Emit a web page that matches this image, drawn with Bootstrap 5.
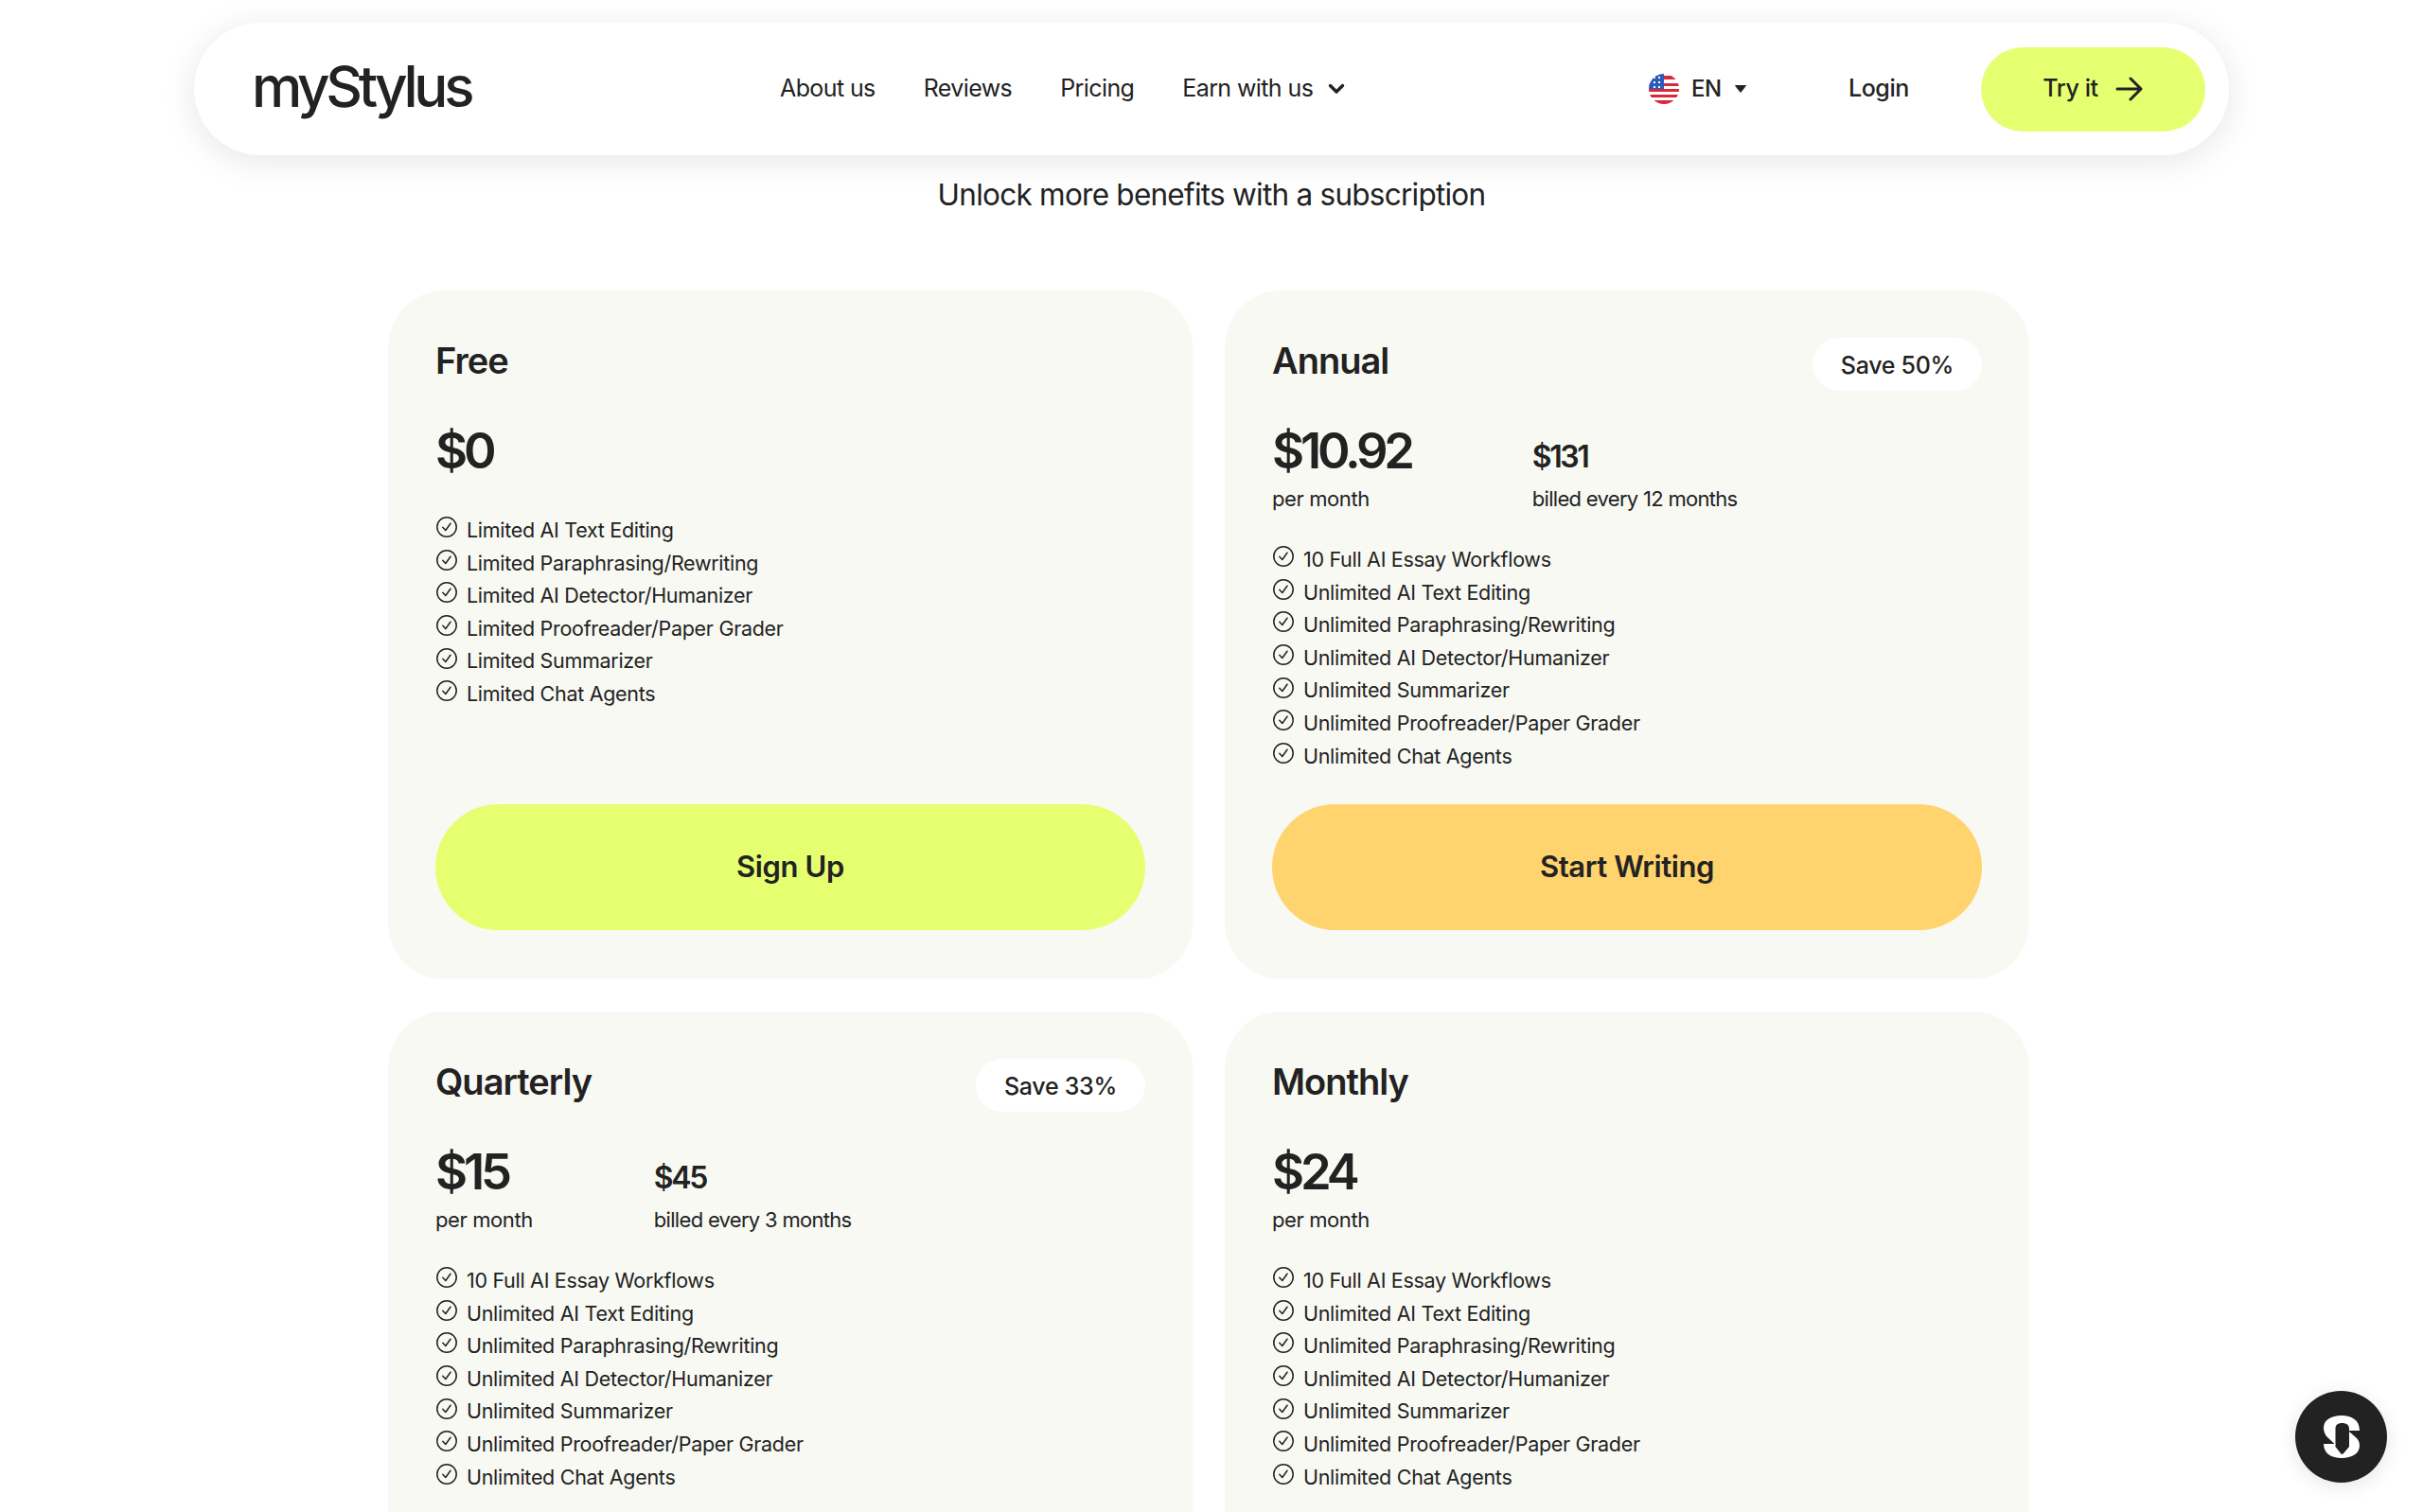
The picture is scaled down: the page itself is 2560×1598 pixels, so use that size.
<!DOCTYPE html>
<html lang="en">
<head>
<meta charset="utf-8">
<title>myStylus pricing</title>
<link rel="stylesheet" href="https://cdn.jsdelivr.net/npm/bootstrap@5.3.0/dist/css/bootstrap.min.css">
<style>
html,body{height:100vh;overflow:hidden;background:#fff}
body{font-family:Inter,"Liberation Sans",sans-serif;color:#222;padding-top:24px}
.ms-wrap{width:2150px;margin:0 auto}
.ms-nav{height:140px;border-radius:70px;background:#fff;box-shadow:0 6px 36px rgba(0,0,0,.1);padding:0 25px 0 61px}
.ms-logo{font-size:60px;font-weight:550;letter-spacing:-4.3px;color:#222;line-height:1;width:558px;text-decoration:none;padding-bottom:6px}
.ms-links{gap:51px;font-size:25px;letter-spacing:-.6px;width:871px}
.ms-links a,.ms-login{color:#222;text-decoration:none}
.ms-lang{font-size:24px;font-weight:500;gap:9px;width:196px;margin-left:47px;letter-spacing:-.5px}
.ms-login{font-size:25px;font-weight:500;letter-spacing:-.4px;margin-right:76px}
.ms-try{width:237px;height:89px;border-radius:45px;background:#e6ff70;border:0;font-size:25px;font-weight:500;color:#222;gap:18px;letter-spacing:-.4px}
.ms-try:hover{background:#e6ff70;color:#222}
.ms-sub{font-size:31.5px;line-height:40px;text-align:center;margin:22px 0 0;letter-spacing:-.75px;color:#222}
.ms-plans{width:1768px;margin:47px 0 0 393px;--bs-gutter-x:34px;--bs-gutter-y:34px}
.ms-plan{background:#f8f9f3;border:0;border-radius:60px;min-height:728px;padding:50px 50px 52px;color:#222}
.ms-head{height:48px}
.ms-name{font-size:38px;font-weight:600;line-height:48px;letter-spacing:-1px;margin:0}
.ms-save{background:#fff;border-radius:28px;height:56px;padding:3px 30px 0;font-size:25px;font-weight:500;letter-spacing:-.3px}
.ms-prices{gap:128px;margin-top:39px}
.ms-big{font-size:52.5px;font-weight:600;line-height:64px;letter-spacing:-4.2px}
.ms-mid{font-size:32px;font-weight:600;line-height:51px;letter-spacing:-2.4px;padding-top:13px}
.ms-per{font-size:22px;line-height:30px;margin-top:4px;height:30px;letter-spacing:-.4px}
.ms-billed{letter-spacing:-.7px}
.ms-list{list-style:none;margin:32px 0 0;padding:0;font-size:21.5px;letter-spacing:-.3px}
.ms-list li{height:34.6px;gap:9px;line-height:34.6px;white-space:nowrap}
.ms-list svg{flex:none;margin-top:-6px}
.ms-free .ms-list{margin-top:35px}
.ms-cta{height:133px;border-radius:67px;border:0;font-size:31px;font-weight:600;color:#222;width:100%;letter-spacing:-.4px}
.ms-cta:hover{color:#222}
.ms-lime{background:#e6ff70}.ms-lime:hover{background:#e6ff70}
.ms-amber{background:#ffd36e}.ms-amber:hover{background:#ffd36e}
.ms-fab{position:fixed;left:2425px;top:1470px;width:97px;height:97px;border-radius:50%;background:#222;box-shadow:0 4px 20px rgba(0,0,0,.1)}
</style>
</head>
<body>
<svg width="0" height="0" class="position-absolute"><defs>
<symbol id="chk" viewBox="0 0 24 24"><circle cx="12" cy="12" r="10.2" fill="none" stroke="#222" stroke-width="1.5"/><path d="M7.8 12.3l3 3.2 5.2-7.3" fill="none" stroke="#222" stroke-width="1.5" stroke-linecap="round" stroke-linejoin="round"/></symbol>
</defs></svg>

<div class="ms-wrap">
<nav class="navbar ms-nav d-flex flex-nowrap align-items-center">
  <a class="ms-logo" href="#">myStylus</a>
  <div class="ms-links d-flex align-items-center">
    <a href="#">About us</a><a href="#">Reviews</a><a href="#">Pricing</a>
    <a href="#" class="d-flex align-items-center gap-3">Earn with us
      <svg width="18" height="12" viewBox="0 0 18 12"><path d="M2.500 2.500L9 9l6.500-6.500" fill="none" stroke="#222" stroke-width="3.400" stroke-linecap="round" stroke-linejoin="round"/></svg></a>
  </div>
  <div class="ms-lang d-flex align-items-center">
    <svg width="32" height="32" viewBox="0 0 32 32"><defs><clipPath id="flagc"><circle cx="16" cy="16" r="16"/></clipPath></defs><g clip-path="url(#flagc)"><rect width="32" height="32" fill="#fff"/><path d="M0 2h32v4H0zM0 10h32v3H0zM0 16h32v3H0zM0 22h32v3H0zM0 28h32v4H0z" fill="#d8293a"/><rect width="16" height="16" fill="#2a5cb8"/><path d="M5 3h2v2H5zM10 3h2v2h-2zM5 8h2v2H5zM10 8h2v2h-2zM5 13h2v2H5zM10 13h2v2h-2z" fill="#fff"/></g></svg>
    <span class="ms-1">EN</span>
    <svg class="ms-1" width="14" height="10" viewBox="0 0 14 10"><path d="M1.500 1.500h11L7 8.500z" fill="#222" stroke="#222" stroke-linejoin="round"/></svg>
  </div>
  <a class="ms-login ms-auto" href="#">Login</a>
  <button class="btn ms-try d-flex align-items-center justify-content-center">Try it
    <svg width="30" height="26" viewBox="0 0 30 26"><path d="M2 13h25M16 2l11 11-11 11" fill="none" stroke="#222" stroke-width="3" stroke-linecap="round" stroke-linejoin="round"/></svg></button>
</nav>
<p class="ms-sub">Unlock more benefits with a subscription</p>
</div>

<div class="row row-cols-2 ms-plans">
  <div class="col">
    <div class="card ms-plan ms-free">
      <div class="ms-head"><h5 class="ms-name">Free</h5></div>
      <div class="ms-prices d-flex"><div class="ms-big">$0</div></div>
      <ul class="ms-list">
        <li class="d-flex align-items-center"><svg width="24" height="24"><use href="#chk"/></svg>Limited AI Text Editing</li>
        <li class="d-flex align-items-center"><svg width="24" height="24"><use href="#chk"/></svg>Limited Paraphrasing/Rewriting</li>
        <li class="d-flex align-items-center"><svg width="24" height="24"><use href="#chk"/></svg>Limited AI Detector/Humanizer</li>
        <li class="d-flex align-items-center"><svg width="24" height="24"><use href="#chk"/></svg>Limited Proofreader/Paper Grader</li>
        <li class="d-flex align-items-center"><svg width="24" height="24"><use href="#chk"/></svg>Limited Summarizer</li>
        <li class="d-flex align-items-center"><svg width="24" height="24"><use href="#chk"/></svg>Limited Chat Agents</li>
      </ul>
      <button class="btn ms-cta ms-lime mt-auto">Sign Up</button>
    </div>
  </div>
  <div class="col">
    <div class="card ms-plan">
      <div class="ms-head d-flex justify-content-between align-items-start"><h5 class="ms-name">Annual</h5><span class="ms-save d-flex align-items-center">Save 50%</span></div>
      <div class="ms-prices d-flex">
        <div><div class="ms-big">$10.92</div><div class="ms-per">per month</div></div>
        <div><div class="ms-mid">$131</div><div class="ms-per ms-billed">billed every 12 months</div></div>
      </div>
      <ul class="ms-list">
        <li class="d-flex align-items-center"><svg width="24" height="24"><use href="#chk"/></svg>10 Full AI Essay Workflows</li>
        <li class="d-flex align-items-center"><svg width="24" height="24"><use href="#chk"/></svg>Unlimited AI Text Editing</li>
        <li class="d-flex align-items-center"><svg width="24" height="24"><use href="#chk"/></svg>Unlimited Paraphrasing/Rewriting</li>
        <li class="d-flex align-items-center"><svg width="24" height="24"><use href="#chk"/></svg>Unlimited AI Detector/Humanizer</li>
        <li class="d-flex align-items-center"><svg width="24" height="24"><use href="#chk"/></svg>Unlimited Summarizer</li>
        <li class="d-flex align-items-center"><svg width="24" height="24"><use href="#chk"/></svg>Unlimited Proofreader/Paper Grader</li>
        <li class="d-flex align-items-center"><svg width="24" height="24"><use href="#chk"/></svg>Unlimited Chat Agents</li>
      </ul>
      <button class="btn ms-cta ms-amber mt-auto">Start Writing</button>
    </div>
  </div>
  <div class="col">
    <div class="card ms-plan">
      <div class="ms-head d-flex justify-content-between align-items-start"><h5 class="ms-name">Quarterly</h5><span class="ms-save d-flex align-items-center">Save 33%</span></div>
      <div class="ms-prices d-flex">
        <div><div class="ms-big">$15</div><div class="ms-per">per month</div></div>
        <div><div class="ms-mid">$45</div><div class="ms-per ms-billed">billed every 3 months</div></div>
      </div>
      <ul class="ms-list">
        <li class="d-flex align-items-center"><svg width="24" height="24"><use href="#chk"/></svg>10 Full AI Essay Workflows</li>
        <li class="d-flex align-items-center"><svg width="24" height="24"><use href="#chk"/></svg>Unlimited AI Text Editing</li>
        <li class="d-flex align-items-center"><svg width="24" height="24"><use href="#chk"/></svg>Unlimited Paraphrasing/Rewriting</li>
        <li class="d-flex align-items-center"><svg width="24" height="24"><use href="#chk"/></svg>Unlimited AI Detector/Humanizer</li>
        <li class="d-flex align-items-center"><svg width="24" height="24"><use href="#chk"/></svg>Unlimited Summarizer</li>
        <li class="d-flex align-items-center"><svg width="24" height="24"><use href="#chk"/></svg>Unlimited Proofreader/Paper Grader</li>
        <li class="d-flex align-items-center"><svg width="24" height="24"><use href="#chk"/></svg>Unlimited Chat Agents</li>
      </ul>
    </div>
  </div>
  <div class="col">
    <div class="card ms-plan">
      <div class="ms-head"><h5 class="ms-name">Monthly</h5></div>
      <div class="ms-prices d-flex">
        <div><div class="ms-big">$24</div><div class="ms-per">per month</div></div>
      </div>
      <ul class="ms-list">
        <li class="d-flex align-items-center"><svg width="24" height="24"><use href="#chk"/></svg>10 Full AI Essay Workflows</li>
        <li class="d-flex align-items-center"><svg width="24" height="24"><use href="#chk"/></svg>Unlimited AI Text Editing</li>
        <li class="d-flex align-items-center"><svg width="24" height="24"><use href="#chk"/></svg>Unlimited Paraphrasing/Rewriting</li>
        <li class="d-flex align-items-center"><svg width="24" height="24"><use href="#chk"/></svg>Unlimited AI Detector/Humanizer</li>
        <li class="d-flex align-items-center"><svg width="24" height="24"><use href="#chk"/></svg>Unlimited Summarizer</li>
        <li class="d-flex align-items-center"><svg width="24" height="24"><use href="#chk"/></svg>Unlimited Proofreader/Paper Grader</li>
        <li class="d-flex align-items-center"><svg width="24" height="24"><use href="#chk"/></svg>Unlimited Chat Agents</li>
      </ul>
    </div>
  </div>
</div>

<div class="ms-fab d-flex align-items-center justify-content-center">
  <svg width="38" height="45" viewBox="0 0 38 45"><path fill="#fff" d="M0 13C0 5 8 0 19 0s19 5 19 16H27v-2c0-4-3-6-7.500-6S12.500 10 12.500 14v17L3 22C1 19 0 16 0 13Z"/><path fill="#fff" d="M38 32c0 8-8 13-19 13S0 40 0 30h12.500v3l5.500 7c1 1.300 2 1.300 3 0l6-7V17l8 7c2 2 3 5 3 8Z"/></svg>
</div>
<script src="https://cdn.jsdelivr.net/npm/bootstrap@5.3.0/dist/js/bootstrap.bundle.min.js"></script>
</body>
</html>
